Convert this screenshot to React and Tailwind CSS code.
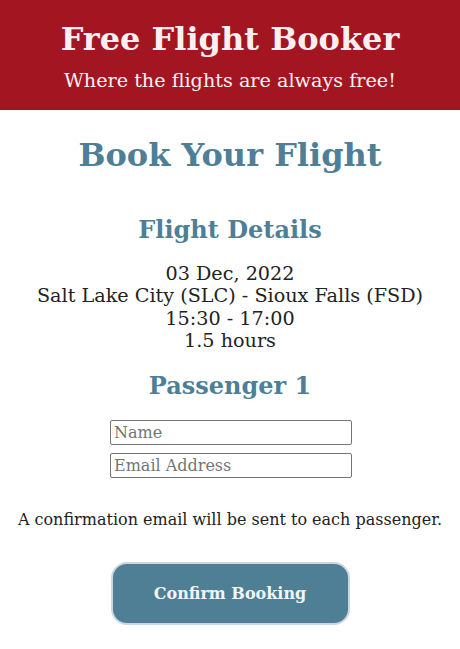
import React from 'react';

const serif = { fontFamily: '"DejaVu Serif", serif' };

export default function App() {
  return (
    <div className="min-h-screen bg-white text-[#222]" style={serif}>
      <header className="bg-[#a31621] pt-[20px] pb-[18px] text-center text-[#fbeff1]">
        <h1 className="text-[32px] leading-[38px] font-bold">Free Flight Booker</h1>
        <p className="mt-[11px] text-[19.2px] leading-[23px]">Where the flights are always free!</p>
      </header>

      <main className="flex flex-col items-center text-center">
        <h2 className="mt-[26px] text-[32px] leading-[38px] font-bold text-[#4e7f96]">Book Your Flight</h2>

        <h3 className="mt-[42px] text-[24px] leading-[28px] font-bold text-[#4e7f96]">Flight Details</h3>
        <div className="mt-[19px] text-[19.2px] leading-[22.3px]">
          <p>03 Dec, 2022</p>
          <p>Salt Lake City (SLC) - Sioux Falls (FSD)</p>
          <p>15:30 - 17:00</p>
          <p>1.5 hours</p>
        </div>

        <h3 className="mt-[20px] text-[24px] leading-[28px] font-bold text-[#4e7f96]">Passenger 1</h3>
        <form className="mt-[20px] ml-[2px] flex flex-col gap-[8px]" onSubmit={(e) => e.preventDefault()}>
          <input
            type="text"
            placeholder="Name"
            className="w-[242px] h-[25px] px-[3px] border border-[#767676] rounded-[2px] text-[16px] placeholder:text-[#757575] outline-none"
            style={serif}
          />
          <input
            type="email"
            placeholder="Email Address"
            className="w-[242px] h-[25px] px-[3px] border border-[#767676] rounded-[2px] text-[16px] placeholder:text-[#757575] outline-none"
            style={serif}
          />
        </form>

        <p className="mt-[32px] text-[16px] leading-[20px]">A confirmation email will be sent to each passenger.</p>

        <button
          type="button"
          className="mt-[32px] w-[239px] h-[63px] rounded-[16px] bg-[#4f7f95] border-2 border-[#c9d8e0] text-[16px] font-bold text-[#f1f5f8]"
          style={serif}
        >
          Confirm Booking
        </button>
      </main>
    </div>
  );
}
